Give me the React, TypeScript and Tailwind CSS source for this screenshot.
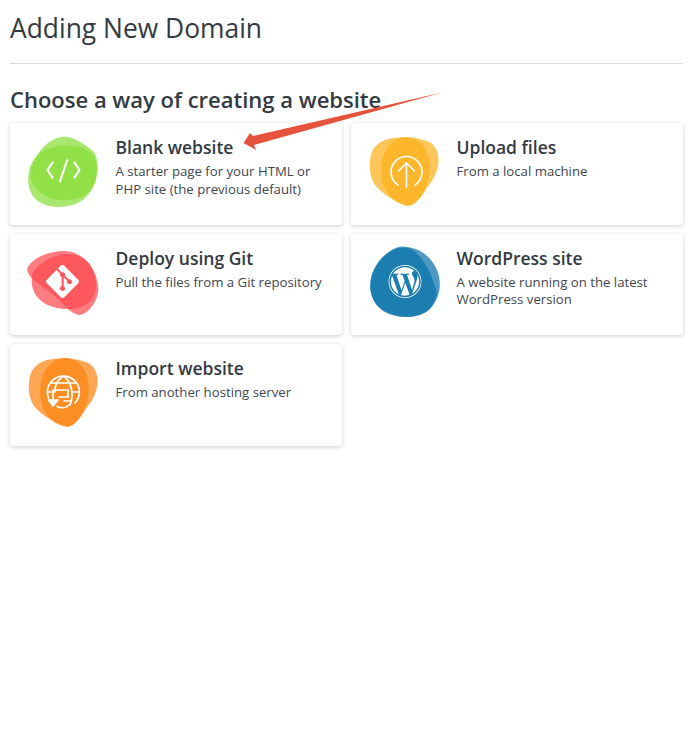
import React from "react";
import { SiGit } from "react-icons/si";
import { FaWordpress } from "react-icons/fa";

const YELLOW_A = "M24 11C38 6 60 8 70 14C80 22 80 38 71 52C63 62 56 78 47 76.500C38 74 24 68 14 56C7 46 8 30 11 23C14 16 19 13 24 11Z";
const YELLOW_B = "M45 8C62 8 71 26 68.500 45C66 62 57 74 47 77C28 74 18 56 20.500 36C22 20 32 8 45 8Z";

function Blob({ a, b, fill, children }: { a: string; b: string; fill: string; children: React.ReactNode }) {
  return (
    <svg width="85" height="85" viewBox="0 0 85 85" className="shrink-0" fill="none">
      <path d={a} fill={fill} opacity="0.72" />
      <path d={b} fill={fill} opacity="0.72" />
      {children}
    </svg>
  );
}

const icons: Record<string, React.ReactNode> = {
  code: (
    <Blob
      fill="#89de38"
      a="M41 8C52 6 64 15 73 22C79 28 78 42 75 54C70 68 55 72 40 71C25 70 13 60 11 48C10 30 25 11 41 8Z"
      b="M9 42C12 26 28 16.500 45 16.500C60 16 72 20 76 32C80 45 74 60 66 68C55 80 30 81 18 72C8 65 7 52 9 42Z"
    >
      <g stroke="#fff" strokeWidth="2.200" strokeLinecap="round" strokeLinejoin="round">
        <path d="M32.500 33.500L27.500 41L32.500 48.500" />
        <path d="M54.500 33.500L59.500 41L54.500 48.500" />
        <path d="M47 31.500L40 52.500" />
      </g>
    </Blob>
  ),
  upload: (
    <Blob fill="#fdb01b" a={YELLOW_A} b={YELLOW_B}>
      <g stroke="#fff" strokeWidth="1.600" strokeLinecap="round" strokeLinejoin="round">
        <path d="M37 56A15.500 15.500 0 1 1 54 56" />
        <path d="M45.500 58V34" />
        <path d="M37.500 42L45.500 34L53.500 42" />
      </g>
    </Blob>
  ),
  git: (
    <Blob
      fill="#ff4a50"
      a="M7 29C12 17 30 11 45 11C62 12 75 25 78 45C80 58 70 74 59 75C50 74 40 60 30 52C20 45 7 37 7 29Z"
      b="M13 32C22 20 35 14 50 14C68 16 76 30 76 45C76 60 65 69 50 69C30 70 14 60 12 45C11 40 12 35 13 32Z"
    >
      <SiGit x="26" y="25" size="33" color="#fff" />
    </Blob>
  ),
  wp: (
    <Blob
      fill="#0a72ab"
      a="M40 6.500C55 6 70 15 76 30C82 45 78 60 68 70C55 80 35 78 22 70C10 62 6 48 12 32C18 18 30 8 40 6.500Z"
      b="M11 34C18 15 35 4 50 9C62 16 72 35 76 54C74 62 70 68 66 71C55 79 35 79 22 71C10 63 7 48 11 34Z"
    >
      <FaWordpress x="27" y="24.500" size="34" color="#fff" />
    </Blob>
  ),
  globe: (
    <Blob fill="#fc8512" a={YELLOW_A} b={YELLOW_B}>
      <g stroke="#fff" strokeWidth="1.700" strokeLinecap="round" strokeLinejoin="round">
        <path d="M28.500 48A16 16 0 1 1 55 53" />
        <path d="M43.500 26C35 32 35 37 35 42" />
        <path d="M43.500 26C52 32 54 45 50 55" />
        <path d="M31 33H56" />
        <path d="M28 42H31" />
        <path d="M53 42H59" />
        <path d="M33 49V40H48V47H39" />
        <path d="M28.500 50H38L33 56Z" fill="#fff" />
        <path d="M37 56.500C41 58.500 46 58 49 55" />
        <path d="M44 51L51 51" />
      </g>
    </Blob>
  ),
};

const cards = [
  { icon: "code", title: "Blank website", desc: "A starter page for your HTML or PHP site (the previous default)" },
  { icon: "upload", title: "Upload files", desc: "From a local machine" },
  { icon: "git", title: "Deploy using Git", desc: "Pull the files from a Git repository" },
  { icon: "wp", title: "WordPress site", desc: "A website running on the latest WordPress version" },
  { icon: "globe", title: "Import website", desc: "From another hosting server" },
];

export default function App() {
  return (
    <div className="relative min-h-[741px] bg-white pt-[10px] pr-[11px] pl-[10px] font-['Open_Sans',sans-serif] text-[#2e3238]">
      <h1 className="border-b border-[#d9d9e0] pb-[17px] text-[26.400px] leading-[36px] font-normal text-[#333a42]">Adding New Domain</h1>
      <h2 className="mt-[20px] text-[22px] leading-[30px] font-semibold text-[#333a42]">Choose a way of creating a website</h2>
      <div className="mt-[9px] grid grid-cols-2 gap-x-[9px] gap-y-[9px]">
        {cards.map((c) => (
          <div key={c.title} className="flex h-[101.500px] gap-[10.500px] rounded-[3px] bg-white pt-[6px] pl-[10px] shadow-[0_1px_4px_rgba(0,0,0,0.2)]">
            {icons[c.icon]}
            <div className="pt-[6px] pr-[20px]">
              <div className="text-[17.500px] leading-[25px] font-semibold text-[#333a42]">{c.title}</div>
              <div className="mt-[3px] text-[13.200px] leading-[17.500px] text-[#3f4650]">{c.desc}</div>
            </div>
          </div>
        ))}
      </div>
      <svg className="absolute top-0 left-0" width="694" height="200" viewBox="0 0 694 200" fill="none">
        <path d="M442 92.500L253 136L250 133L243.500 143L256 150L254 145Z" fill="#e5533d" />
      </svg>
    </div>
  );
}
